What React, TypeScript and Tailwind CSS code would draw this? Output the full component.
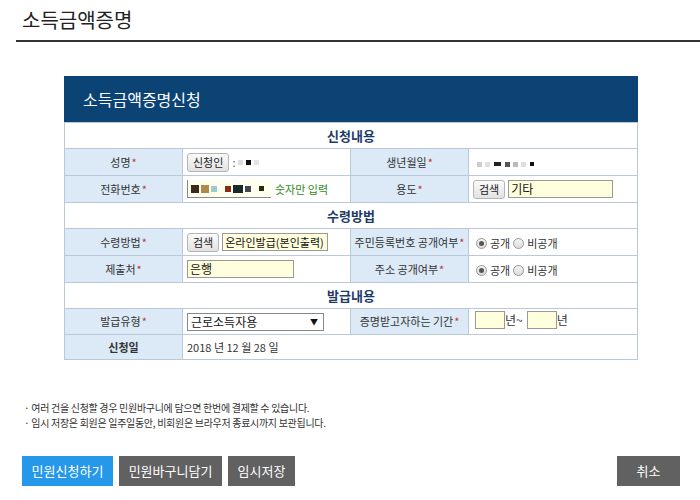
import React from 'react';

const font = { fontFamily: '"Noto Sans CJK KR", "Noto Sans", sans-serif' };

function Star() {
  return <span className="text-[#c0392b] ml-px">*</span>;
}

function Label({ children, req = true, bold = false }: { children: React.ReactNode; req?: boolean; bold?: boolean }) {
  return (
    <td className={`bg-[#dce9f6] border border-[#b9c9d9] text-center text-[11px] text-[#333] ${bold ? 'font-bold' : ''}`}>
      {children}
      {req && <Star />}
    </td>
  );
}

function Cell({ children }: { children?: React.ReactNode }) {
  return <td className="border border-[#b9c9d9] px-[4px] text-[11px] text-[#333]">{children}</td>;
}

function SmallBtn({ children }: { children: React.ReactNode }) {
  return (
    <span className="inline-flex items-center h-[19px] px-[5px] border border-[#b5b5b5] rounded-[3px] bg-gradient-to-b from-[#fbfbfb] to-[#e2e2e2] text-[11px] text-[#222] leading-none">
      {children}
    </span>
  );
}

function Pix({ colors }: { colors: string[] }) {
  return (
    <span className="inline-flex items-center gap-[3px]">
      {colors.map((c, i) => (
        <span key={i} className="inline-block w-[5px] h-[5px]" style={{ background: c }} />
      ))}
    </span>
  );
}

function Radio({ on }: { on?: boolean }) {
  return (
    <span className="inline-flex items-center justify-center w-[11px] h-[11px] rounded-full border border-[#9a9a9a] bg-gradient-to-b from-[#f4f4f4] to-[#dcdcdc]">
      {on && <span className="w-[5px] h-[5px] rounded-full bg-[#555]" />}
    </span>
  );
}

function Section({ title }: { title: string }) {
  return (
    <tr className="h-[26px]">
      <td colSpan={4} className="border border-[#b9c9d9] bg-white text-center text-[13px] font-bold text-[#1d3b66]">
        {title}
      </td>
    </tr>
  );
}

export default function App() {
  return (
    <div className="w-[700px] h-[500px] bg-white relative overflow-hidden" style={font}>
      <div className="pl-[22px] pt-[6px] h-[40px] text-[20px] text-[#222] leading-[28px]">소득금액증명</div>
      <div className="ml-[16px] h-[2px] bg-[#333]" />

      <div className="ml-[64px] mt-[34px] w-[574px]">
        <div className="h-[46px] bg-[#0b4375] text-white text-[16px] flex items-center pl-[19px]">소득금액증명신청</div>
        <table className="w-full border-collapse table-fixed">
          <colgroup>
            <col className="w-[118px]" />
            <col className="w-[168px]" />
            <col className="w-[118px]" />
            <col />
          </colgroup>
          <tbody>
            <Section title="신청내용" />
            <tr className="h-[27px]">
              <Label>성명</Label>
              <Cell>
                <span className="inline-flex items-center gap-[3px]">
                  <SmallBtn>신청인</SmallBtn>
                  <span className="text-[#555]">:</span>
                  <Pix colors={['#ddd', '#111', '#e4e4e4']} />
                </span>
              </Cell>
              <Label>생년월일</Label>
              <Cell>
                <span className="inline-flex items-center gap-[4px] pl-[4px]">
                  <Pix colors={['#ccc', '#e0e0e0']} />
                  <span className="inline-block w-[7px] h-[4px] bg-[#222]" />
                  <Pix colors={['#555', '#bbb', '#ddd']} />
                  <span className="inline-block w-[4px] h-[4px] bg-[#111]" />
                </span>
              </Cell>
            </tr>
            <tr className="h-[27px]">
              <Label>전화번호</Label>
              <Cell>
                <span className="inline-flex items-center gap-[4px]">
                  <span className="inline-flex items-center gap-[2px] w-[84px] h-[18px] border-l border-b border-[#888] bg-[#fffff0] px-[3px]">
                    <span className="w-[8px] h-[8px] bg-[#3a2a1a]" />
                    <span className="w-[8px] h-[8px] bg-[#b08a4a]" />
                    <span className="w-[6px] h-[6px] bg-[#9cc]" />
                    <span className="w-[4px]" />
                    <span className="w-[6px] h-[6px] bg-[#8a2a10]" />
                    <span className="w-[10px] h-[8px] bg-[#1a2a2a]" />
                    <span className="w-[6px] h-[6px] bg-[#445]" />
                    <span className="w-[4px]" />
                    <span className="w-[5px] h-[5px] bg-[#2a2a10]" />
                  </span>
                  <span className="text-[#2f8a1a]">숫자만 입력</span>
                </span>
              </Cell>
              <Label>용도</Label>
              <Cell>
                <span className="inline-flex items-center gap-[3px]">
                  <SmallBtn>검색</SmallBtn>
                  <span className="inline-flex items-center w-[105px] h-[18px] border border-[#999] bg-[#ffffdd] px-[2px] text-[12px] text-[#111]">기타</span>
                </span>
              </Cell>
            </tr>
            <Section title="수령방법" />
            <tr className="h-[27px]">
              <Label>수령방법</Label>
              <Cell>
                <span className="inline-flex items-center gap-[3px]">
                  <SmallBtn>검색</SmallBtn>
                  <span className="inline-flex items-center w-[106px] h-[18px] border border-[#999] bg-[#ffffdd] px-[2px] text-[11px] text-[#111] whitespace-nowrap overflow-hidden">온라인발급(본인출력)</span>
                </span>
              </Cell>
              <Label>주민등록번호 공개여부</Label>
              <Cell>
                <span className="inline-flex items-center gap-[3px] pl-[3px]">
                  <Radio on /> 공개 <Radio /> 비공개
                </span>
              </Cell>
            </tr>
            <tr className="h-[27px]">
              <Label>제출처</Label>
              <Cell>
                <span className="inline-flex items-center w-[107px] h-[18px] border border-[#999] bg-[#ffffdd] px-[2px] text-[12px] text-[#111]">은행</span>
              </Cell>
              <Label>주소 공개여부</Label>
              <Cell>
                <span className="inline-flex items-center gap-[3px] pl-[3px]">
                  <Radio on /> 공개 <Radio /> 비공개
                </span>
              </Cell>
            </tr>
            <Section title="발급내용" />
            <tr className="h-[26px]">
              <Label>발급유형</Label>
              <Cell>
                <span className="inline-flex items-center justify-between w-[137px] h-[18px] border border-[#888] bg-white px-[3px] text-[12px] text-[#111]">
                  근로소득자용
                  <span className="text-[8px] pr-[2px]">▼</span>
                </span>
              </Cell>
              <Label>증명받고자하는 기간</Label>
              <Cell>
                <span className="inline-flex items-center text-[12px] pl-[2px]">
                  <span className="w-[30px] h-[18px] border border-[#999] bg-[#ffffdd]" />
                  <span className="mr-[4px]">년~</span>
                  <span className="w-[30px] h-[18px] border border-[#999] bg-[#ffffdd]" />
                  <span>년</span>
                </span>
              </Cell>
            </tr>
            <tr className="h-[25px]">
              <Label req={false} bold>
                신청일
              </Label>
              <td colSpan={3} className="border border-[#b9c9d9] px-[4px] text-[11px] text-[#333]">
                2018 년 12 월 28 일
              </td>
            </tr>
          </tbody>
        </table>
      </div>

      <div className="ml-[24px] mt-[40px] text-[10px] leading-[15px] text-[#333] tracking-[-0.3px]">
        <div>· 여러 건을 신청할 경우 민원바구니에 담으면 한번에 결제할 수 있습니다.</div>
        <div>· 임시 저장은 회원은 일주일동안, 비회원은 브라우저 종료시까지 보관됩니다.</div>
      </div>

      <div className="flex items-center mt-[26px] pl-[22px] pr-[20px]">
        <div className="flex gap-[6px]">
          <div className="h-[30px] w-[91px] flex items-center justify-center bg-[#2598ea] text-white text-[13px]">민원신청하기</div>
          <div className="h-[30px] w-[103px] flex items-center justify-center bg-[#616161] text-white text-[13px]">민원바구니담기</div>
          <div className="h-[30px] w-[67px] flex items-center justify-center bg-[#616161] text-white text-[13px]">임시저장</div>
        </div>
        <div className="ml-auto h-[30px] w-[63px] flex items-center justify-center bg-[#616161] text-white text-[13px]">취소</div>
      </div>
    </div>
  );
}
